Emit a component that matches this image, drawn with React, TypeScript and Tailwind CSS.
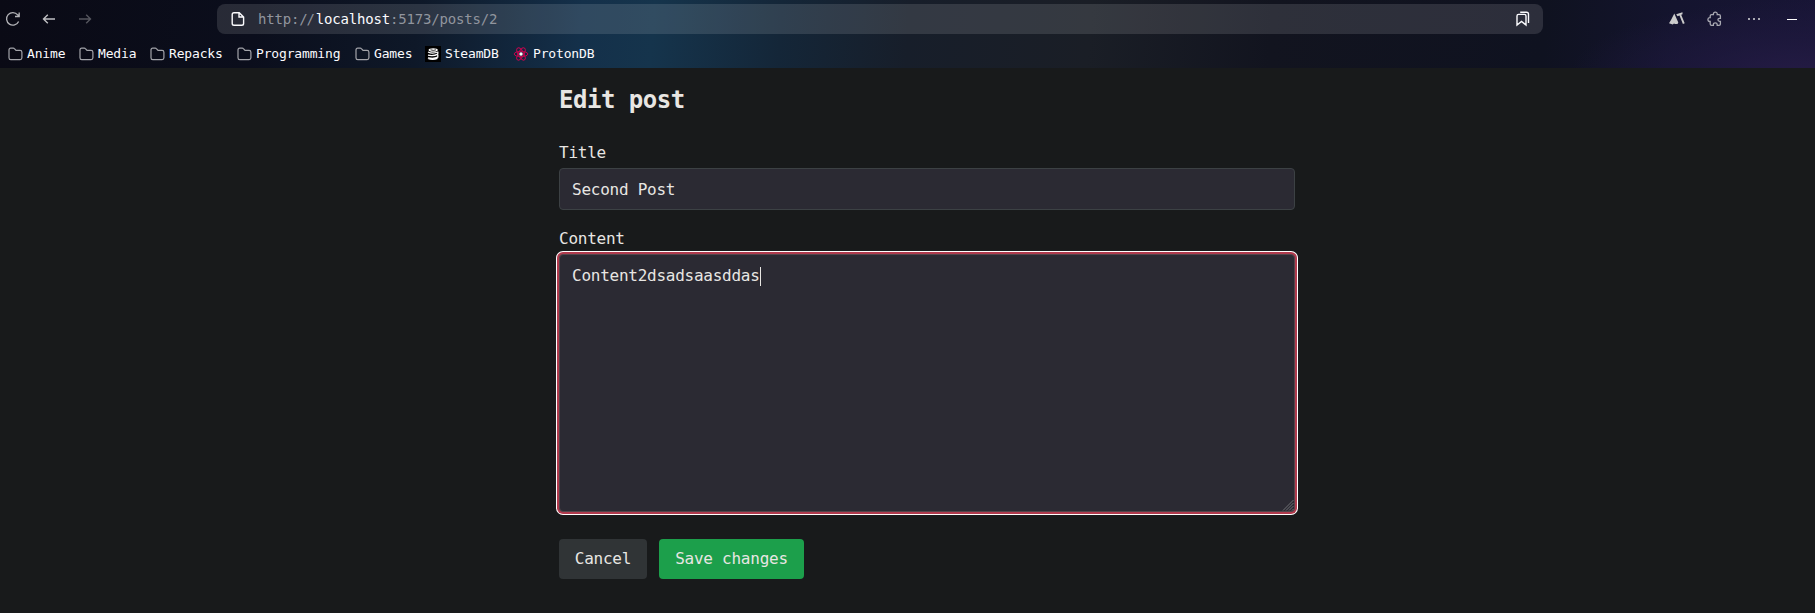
import React from "react";

const Folder = () => (
  <svg className="h-[14px] w-[15px] shrink-0" viewBox="0 0 15 14" fill="none" stroke="#a3a4aa" strokeWidth="1.2">
    <path d="M1 3v7.7Q1 12.6 2.8 12.6h9.3Q13.9 12.6 13.9 10.8V5.2Q13.9 3.4 12.1 3.4H8L6.4 1.6Q6 1.1 5.2 1.1H2.8Q1 1.1 1 3Z" />
  </svg>
);

const SteamDB = () => (
  <svg className="size-4 shrink-0" viewBox="0 0 16 16">
    <path fill="#000" d="M0 0h16v16H0z" />
    <ellipse cx="8.2" cy="4" rx="4.6" ry="1.8" fill="#fff" />
    <path d="M5.5 3.8q3 1.200 5.500 0" fill="none" stroke="#000" strokeWidth="0.8" />
    <path
      d="M3 6q4.500 2.200 9.800 0M12.800 5.500v2.600Q9 10.300 3 9.200M12.800 9v2.200Q9 13 3 11.800M3 12.300q4.500 2 9.500 0"
      fill="none"
      stroke="#fff"
      strokeWidth="1.3"
    />
  </svg>
);

const ProtonDB = () => (
  <svg className="size-4 shrink-0" viewBox="0 0 16 16" fill="none" stroke="#c4064f" strokeWidth="1">
    <ellipse cx="8" cy="8" rx="6.8" ry="2.7" />
    <ellipse cx="8" cy="8" rx="6.8" ry="2.7" transform="rotate(60 8 8)" />
    <ellipse cx="8" cy="8" rx="6.8" ry="2.7" transform="rotate(120 8 8)" />
    <circle cx="8" cy="8" r="1.7" fill="#fff" stroke="none" />
  </svg>
);

const bookmarks = [
  { name: "Anime", icon: <Folder />, width: "w-[71px]" },
  { name: "Media", icon: <Folder />, width: "w-[71px]" },
  { name: "Repacks", icon: <Folder />, width: "w-[87px]" },
  { name: "Programming", icon: <Folder />, width: "w-[118px]" },
  { name: "Games", icon: <Folder />, width: "w-[70px]" },
  { name: "SteamDB", icon: <SteamDB />, width: "w-[88px]" },
  { name: "ProtonDB", icon: <ProtonDB />, width: "w-[90px]" },
];

function Toolbar() {
  return (
    <div className="flex h-[38px] items-center">
      <svg className="ml-[5px] size-4" viewBox="0 0 16 16" fill="none" stroke="#b4b4b8" strokeWidth="1.3">
        <path d="M13.6 10.500A6.300 6.300 0 1 1 12.700 3.800L14 5.200M14.200 1.500V5.500H10" />
      </svg>
      <svg className="ml-[20px] size-4" viewBox="0 0 16 16" fill="none" stroke="#c0c0c3" strokeWidth="1.4">
        <path d="M14 8H2.500M6.800 3.700 2.500 8l4.300 4.300" />
      </svg>
      <svg className="ml-[20px] size-4" viewBox="0 0 16 16" fill="none" stroke="#55565e" strokeWidth="1.4">
        <path d="M2 8h11.500M9.200 3.700 13.500 8l-4.300 4.300" />
      </svg>
      <div className="ml-[124px] flex h-[30px] w-[1326px] items-center rounded-lg bg-[#ffffff1f] pl-[13px] pr-[12px]">
        <svg className="size-4" viewBox="0 0 16 16" fill="none" stroke="#fbfbfe" strokeWidth="1.4">
          <path d="M4 1.700h5.200L13.600 6v6.500q0 1.800-1.800 1.800H4q-1.800 0-1.800-1.800v-9Q2.200 1.700 4 1.700ZM9 1.700V6h4.500" />
        </svg>
        <div className="ml-[12px] flex-1 whitespace-pre text-[14px] leading-5 tracking-[-0.013em] text-[#91959e]">
          http:<span className="tracking-[-0.08em]">/</span><span className="tracking-[0.06em]">/</span>
          <span className="text-[#fbfbfe]">localhost</span>:5173/posts/2
        </div>
        <svg className="size-4" viewBox="0 0 16 16" fill="none" stroke="#fbfbfe" strokeWidth="1.4">
          <path d="M2 5Q2 3.400 3.600 3.400h5.800Q11 3.400 11 5v9L6.500 10.400 2 14ZM5.200 1.300h6.300q2 0 2 2V12" />
        </svg>
      </div>
      <svg className="ml-[126px] size-4" viewBox="0 0 16 16" fill="#cbcbcb">
        <path d="M0 12.300 2 9 5.300 2.500 9.300 11.500 8.500 13H6l-1-.6-1.300 1Z" />
        <path d="M7.200 3.200 13.500 1.200v2l-1.300.5 3.500 8.500-1.800.7L10.500 4.500l-2 .7Z" />
      </svg>
      <svg className="ml-[22px] size-4" viewBox="0 0 16 16" fill="none" stroke="#a9a9b2" strokeWidth="1.3">
        <path d="M3.200 6.600V5q0-1.300 1.300-1.300h1.900V3q0-1.800 1.900-1.800T10.200 3v.7H12q1.400 0 1.400 1.300v2.300h-.7q-1.800 0-1.800 1.500t1.800 1.500h.7V13q0 1.300-1.400 1.300h-1.800v-.9q0-1.600-1.900-1.600t-1.900 1.600v.9H4.500q-1.300 0-1.300-1.300v-2.500h-.5Q.9 10.500.9 8.600T2.700 6.600Z" />
      </svg>
      <svg className="ml-[23px] size-4" viewBox="0 0 16 16" fill="#a9a9b2">
        <path d="M2 7h2v2H2zM7 7h2v2H7zM12 7h2v2h-2z" />
      </svg>
      <div className="ml-[25px] h-px w-[10px] bg-white" />
    </div>
  );
}

export default function App() {
  return (
    <div className="h-[613px] w-[1815px] overflow-hidden bg-[#181a1b] font-['DejaVu_Sans_Mono',monospace] tracking-[-0.016em] text-[#e8e6e3]">
      <header className="h-[68px] bg-[radial-gradient(ellipse_230px_75px_at_1800px_75px,#241b44_0%,#211a4199_45%,transparent_100%),linear-gradient(94deg,#0a0a15_0%,#0b0e1c_14%,#0e1828_23%,#14304a_32%,#15344c_36%,#142638_43%,#171e2a_50%,#1a1e26_60%,#12141f_70%,#0f1220_85%,#14142e_92%,#181536_100%)]">
        <Toolbar />
        <nav className="flex h-[30px] items-center pl-2 pt-px text-[13px] leading-4 tracking-[-0.012em] text-[#fbfbfe]">
          {bookmarks.map((b) => (
            <a key={b.name} className={`flex shrink-0 items-center gap-1 ${b.width}`}>
              {b.icon}
              <span>{b.name}</span>
            </a>
          ))}
        </nav>
      </header>
      <main className="ml-[559px] w-[736px] pt-4">
        <h1 className="text-2xl font-bold tracking-[-0.02em]">Edit post</h1>
        <form className="mt-6">
          <label className="block h-6 pt-px">Title</label>
          <div className="mt-1 flex h-[42px] items-center rounded border border-[#3c4144] bg-[#2b2a33] px-3 pt-0.5">Second Post</div>
          <label className="mt-4 block h-6 pt-px">Content</label>
          <div className="relative mt-1 h-[258px] rounded border border-[#53464c] bg-[#2b2a33] px-3 pt-[9px] shadow-[0_0_0_2px_#b03a4d,0_0_0_3px_#fff]">
            <div className="flex items-center">
              Content2dsadsaasddas
              <span className="h-[19px] w-px bg-[#e8e6e3]" />
            </div>
            <svg className="absolute bottom-0 right-0 size-3" viewBox="0 0 12 12" stroke="#77777c" strokeWidth="0.9">
              <path d="M1 11.500 11.500 1M4 11.500 11.500 4M7 11.500 11.500 7M10 11.500 11.500 10" />
            </svg>
          </div>
          <div className="mt-[27px] flex gap-3">
            <button type="button" className="h-10 w-[88px] rounded bg-[#303436] tracking-[-0.016em]">Cancel</button>
            <button type="button" className="h-10 w-[145px] rounded bg-[#1c9f4b] tracking-[-0.016em]">Save changes</button>
          </div>
        </form>
      </main>
    </div>
  );
}
